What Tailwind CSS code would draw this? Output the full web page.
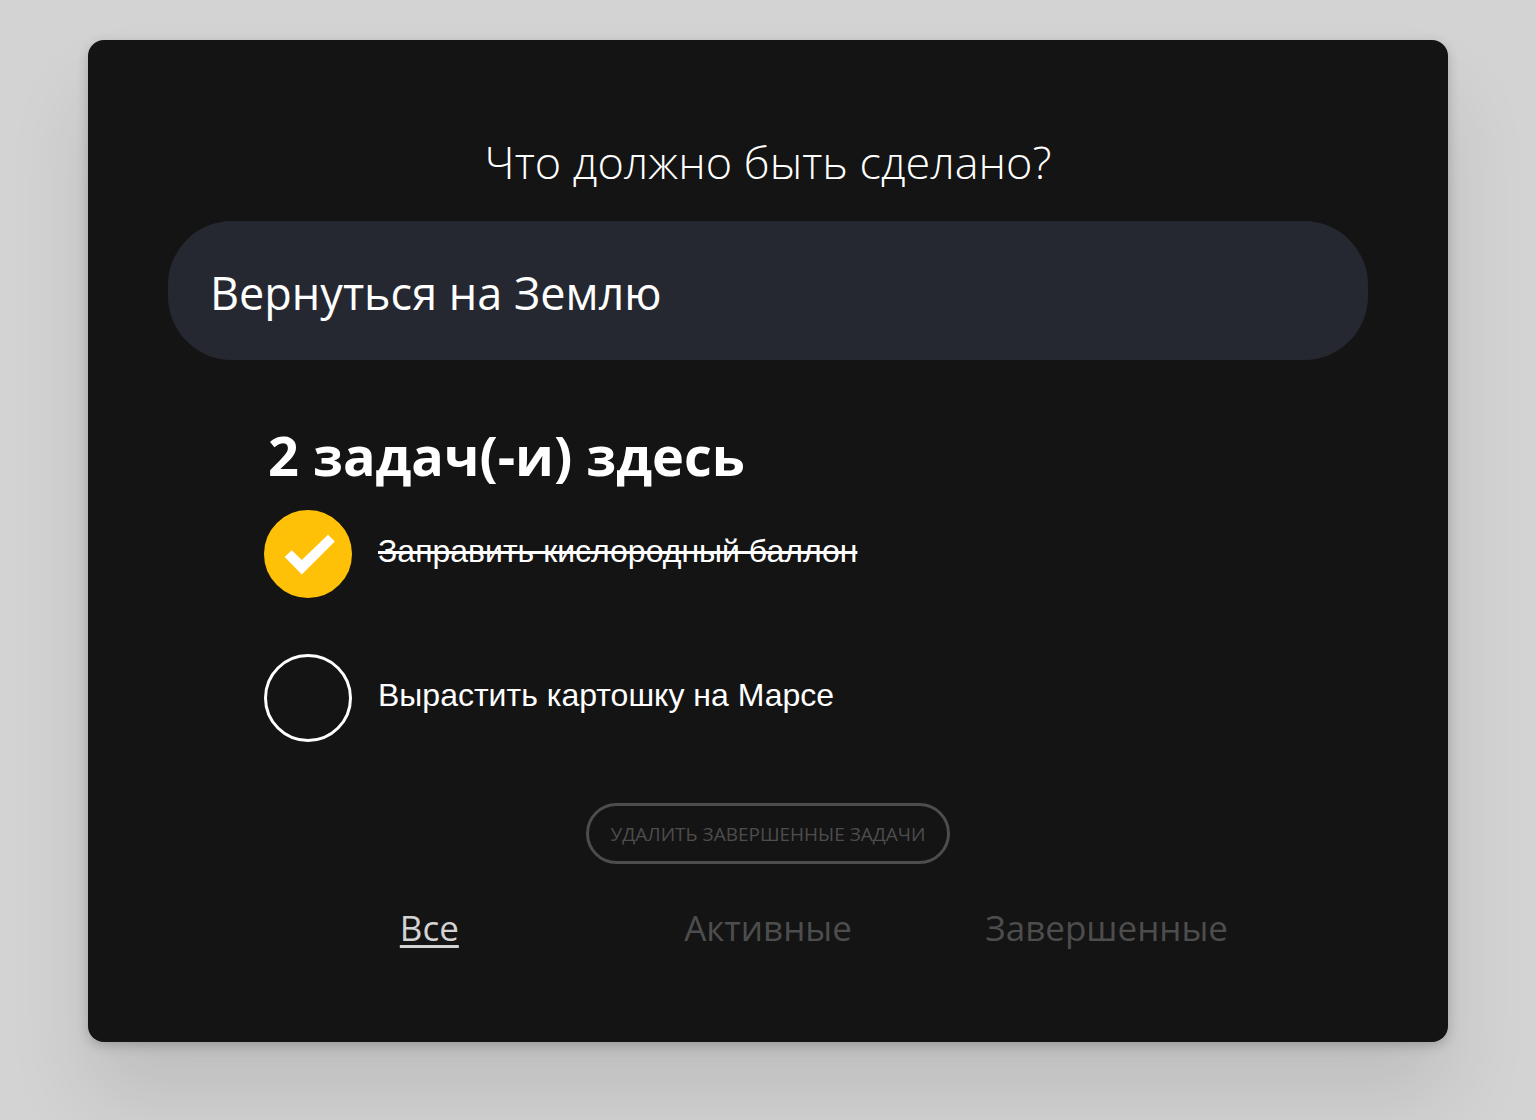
<!DOCTYPE html>
<html lang="ru">
<head>
<meta charset="utf-8">
<title>Список задач</title>
<script src="https://cdn.jsdelivr.net/npm/@tailwindcss/browser@4"></script>
</head>
<body class="min-h-screen bg-[#d3d3d3] px-22 py-10 font-['Open_Sans',sans-serif] text-white">
<main class="flex flex-col rounded-2xl bg-[#141414] px-20 pt-22 pb-20 shadow-[0_4px_12px_rgba(0,0,0,0.2),0_56px_84px_rgba(0,0,0,0.1)]">
  <label for="task" class="text-center text-[45px] leading-[68px] font-light">Что должно быть сделано?</label>
  <input id="task" type="text" value="Вернуться на Землю" class="mt-[25px] h-[139px] w-full rounded-[64px] bg-[#252830] px-[42px] pt-1 text-[45px] outline-none">
  <section class="px-24 pt-15">
    <h1 class="pl-1 text-[54px] leading-[70px] font-bold">2 задач(-и) здесь</h1>
    <ul class="mt-5 flex flex-col gap-14 font-['Liberation_Sans',sans-serif] text-[32px] leading-[40px]">
      <li class="flex h-22 items-center gap-[26px]">
        <span class="relative size-22 shrink-0">
          <input id="t1" type="checkbox" checked class="peer block size-22 appearance-none rounded-full border-3 border-white checked:border-[#ffc107] checked:bg-[#ffc107]">
          <svg class="pointer-events-none absolute inset-0 hidden size-22 peer-checked:block" viewBox="0 0 88 88" aria-hidden="true"><path d="M20.7 47L27.7 40.3L37.8 50L64 24.8L70.8 31.4L37.8 64.5Z" fill="#fff"/></svg>
        </span>
        <label for="t1" class="pb-[6px] line-through">Заправить кислородный баллон</label>
      </li>
      <li class="flex h-22 items-center gap-[26px]">
        <span class="relative size-22 shrink-0">
          <input id="t2" type="checkbox" class="peer block size-22 appearance-none rounded-full border-3 border-white checked:border-[#ffc107] checked:bg-[#ffc107]">
          <svg class="pointer-events-none absolute inset-0 hidden size-22 peer-checked:block" viewBox="0 0 88 88" aria-hidden="true"><path d="M20.7 47L27.7 40.3L37.8 50L64 24.8L70.8 31.4L37.8 64.5Z" fill="#fff"/></svg>
        </span>
        <label for="t2" class="pb-[6px]">Вырастить картошку на Марсе</label>
      </li>
    </ul>
  </section>
  <button type="button" class="mt-[61px] h-[61px] self-center rounded-full border-3 border-[#4d4d4d] px-[22px] pt-[2px] text-[19px] text-[#4d4d4d] uppercase">Удалить завершенные задачи</button>
  <nav class="mt-9 grid grid-cols-3 px-23 pb-[6px] text-center text-[35px] leading-[56px] text-[#4d4d4d]">
    <a href="#" class="justify-self-center text-[#d3d3d3] underline decoration-3 underline-offset-4">Все</a>
    <a href="#" class="justify-self-center">Активные</a>
    <a href="#" class="justify-self-center">Завершенные</a>
  </nav>
</main>
</body>
</html>
